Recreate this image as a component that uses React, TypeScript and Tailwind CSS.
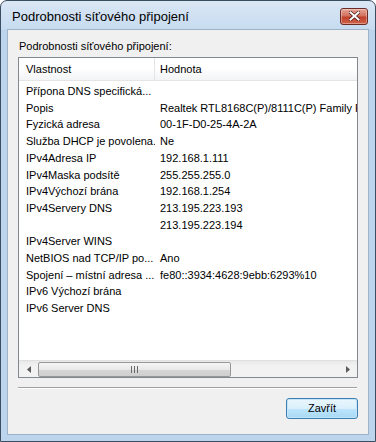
import React from 'react';

const rows: [string, string][] = [
  ['Přípona DNS specifická...', ''],
  ['Popis', 'Realtek RTL8168C(P)/8111C(P) Family PCI-E Gigabit Ethernet NIC (NDIS 6.20)'],
  ['Fyzická adresa', '00-1F-D0-25-4A-2A'],
  ['Služba DHCP je povolena.', 'Ne'],
  ['IPv4Adresa IP', '192.168.1.111'],
  ['IPv4Maska podsítě', '255.255.255.0'],
  ['IPv4Výchozí brána', '192.168.1.254'],
  ['IPv4Servery DNS', '213.195.223.193'],
  ['', '213.195.223.194'],
  ['IPv4Server WINS', ''],
  ['NetBIOS nad TCP/IP po...', 'Ano'],
  ['Spojení – místní adresa ...', 'fe80::3934:4628:9ebb:6293%10'],
  ['IPv6 Výchozí brána', ''],
  ['IPv6 Server DNS', ''],
];

/**
 * Dialog s podrobnostmi síťového připojení (Windows 7)
 */
export default function App() {
  return (
    <div className="w-[376px] h-[442px] [font-family:'Liberation_Sans',Arial,sans-serif] text-[11px] text-black bg-white">
      <div className="w-full h-full flex flex-col border border-[#3b4d60] rounded-t-[7px] bg-[linear-gradient(180deg,#dae7f5_0px,#c7dbf0_28px,#bcd4ec_29px,#bcd4ec_100%)] px-[6px] pb-[6px]">
        {/* Titulek */}
        <div className="h-[28px] flex items-center justify-between pl-[5px] pr-[1px] shrink-0">
          <span className="text-[13px] pt-[4px]">Podrobnosti síťového připojení</span>
          <div className="w-[28px] h-[17px] mt-[2px] rounded-[3px] border border-[#6b2a24] bg-[linear-gradient(180deg,#e6a597_0%,#d2725f_45%,#c0402a_55%,#d1644b_100%)] flex items-center justify-center shadow-[inset_0_0_0_1px_rgba(255,255,255,0.35)]">
            <svg width="11" height="10" viewBox="0 0 11 10">
              <path d="M1.5 1.5 L9.5 8.5 M9.5 1.5 L1.5 8.5" stroke="#4a1a14" strokeWidth="3.4" strokeLinecap="square" />
              <path d="M1.5 1.5 L9.5 8.5 M9.5 1.5 L1.5 8.5" stroke="#ffffff" strokeWidth="2" strokeLinecap="square" />
            </svg>
          </div>
        </div>

        {/* Klientská oblast */}
        <div className="flex-1 bg-[#f0f0f0] border border-[#9fb3c8] flex flex-col px-[10px]">
          <div className="h-[27px] flex items-end pb-[3px] pl-[1px] text-[11px]">Podrobnosti síťového připojení:</div>

          {/* Seznam */}
          <div className="h-[321px] border border-[#828790] bg-white flex flex-col overflow-hidden">
            <div className="h-[23px] shrink-0 flex bg-[linear-gradient(180deg,#ffffff_0%,#ffffff_45%,#f3f4f6_100%)] border-b border-[#e5e5e5]">
              <div className="w-[136px] shrink-0 border-r border-[#e3e4e6] flex items-center pl-[7px]">Vlastnost</div>
              <div className="flex-1 flex items-center pl-[5px]">Hodnota</div>
            </div>
            <div className="flex-1 pt-[2px]">
              {rows.map(([name, value], i) => (
                <div key={i} className="h-[16.7px] flex items-center whitespace-nowrap">
                  <div className="w-[136px] shrink-0 pl-[7px] overflow-hidden">{name}</div>
                  <div className="flex-1 pl-[5px] overflow-hidden">{value}</div>
                </div>
              ))}
            </div>

            {/* Vodorovný posuvník */}
            <div className="h-[17px] shrink-0 flex items-center bg-[linear-gradient(180deg,#e8e8e8_0%,#f2f2f2_30%,#f2f2f2_100%)] border-t border-[#e0e0e0]">
              <div className="w-[19px] h-full flex items-center justify-center">
                <svg width="4" height="7" viewBox="0 0 4 7"><path d="M4 0 L0 3.5 L4 7 Z" fill="#5a5a5a" /></svg>
              </div>
              <div className="w-[193px] h-[15px] rounded-[2px] border border-[#979797] bg-[linear-gradient(180deg,#f5f5f5_0%,#e8e8e8_50%,#d6d6d6_51%,#cfcfcf_100%)] flex items-center justify-center">
                <svg width="8" height="7" viewBox="0 0 8 7">
                  <path d="M0.5 0 V7 M3.5 0 V7 M6.5 0 V7" stroke="#6a6a6a" strokeWidth="1" />
                </svg>
              </div>
              <div className="flex-1" />
              <div className="w-[19px] h-full flex items-center justify-center">
                <svg width="4" height="7" viewBox="0 0 4 7"><path d="M0 0 L4 3.5 L0 7 Z" fill="#5a5a5a" /></svg>
              </div>
            </div>
          </div>

          {/* Oddělovač */}
          <div className="mt-[9px] h-[2px] border-t border-[#a0a0a0] border-b border-b-white mr-[1px]" />

          {/* Tlačítka */}
          <div className="flex justify-end mt-[9px]">
            <button className="w-[72px] h-[21px] rounded-[3px] border border-[#3c7fb1] bg-[linear-gradient(180deg,#eaf6fd_0%,#d9f0fc_50%,#bee6fd_51%,#a7d9f5_100%)] shadow-[inset_0_0_0_1px_#c6e4f7] text-[11px] flex items-center justify-center">
              Zavřít
            </button>
          </div>
        </div>
      </div>
    </div>
  );
}
